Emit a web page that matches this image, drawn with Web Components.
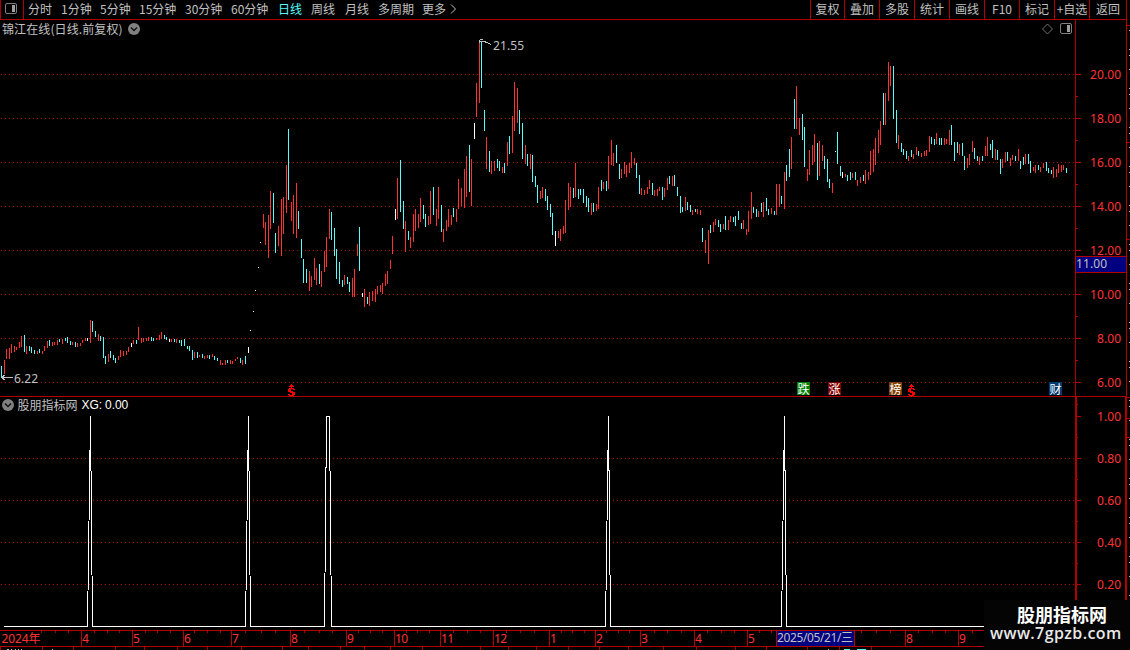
<!DOCTYPE html>
<html lang="zh-CN"><head><meta charset="utf-8"><title>锦江在线</title>
<style>
html,body{margin:0;background:#000;overflow:hidden}
body{width:1130px;height:650px;font:12px/20px "Noto Sans CJK SC",sans-serif;color:#c0c0c0;--line:#b00000;--red:#ff3232;--cyan:#54fcfc}
</style></head><body><stock-app></stock-app>
<script>
const define=(name,cls)=>customElements.define(name,cls);
class Base extends HTMLElement{constructor(){super();this.attachShadow({mode:'open'})}
 set html(v){this.shadowRoot.innerHTML=v}}

define('round-toggle',class extends Base{connectedCallback(){this.html=`<style>:host{display:block;width:12px;height:12px}svg{display:block}</style>
<svg width="12" height="12"><circle cx="6" cy="6" r="6" fill="#808080"/><path d="M3 4.5L6 7.5L9 4.5" fill="none" stroke="#111" stroke-width="1.4"/></svg>`}});

define('layout-icon',class extends Base{connectedCallback(){this.html=`<style>:host{display:block;width:12px;height:12px}svg{display:block}</style>
<svg width="12" height="12"><rect x=".5" y=".5" width="11" height="10" rx="1.5" fill="none" stroke="#808080"/><rect x="7" y="2" width="3" height="7" fill="#a0a0a0"/></svg>`}});

define('tab-item',class extends Base{connectedCallback(){this.html=`<style>:host{display:block;white-space:nowrap;line-height:18px;height:19px}:host([on]){color:var(--cyan)}</style><slot></slot>`}});
define('tool-cell',class extends Base{connectedCallback(){this.html=`<style>:host{display:block;box-sizing:border-box;border-left:1px solid var(--line);text-align:center;white-space:nowrap;line-height:18px;height:19px}</style><slot></slot>`}});

define('top-bar',class extends Base{connectedCallback(){
 const tabs=['分时','1分钟','5分钟','15分钟','30分钟','60分钟','日线','周线','月线','多周期','更多'];
 const tools=['复权','叠加','多股','统计','画线','F10','标记','+自选','返回'];
 this.html=`<style>:host{display:flex;justify-content:space-between;box-sizing:border-box;width:1127px;height:20px;border-bottom:1px solid var(--line);border-left:1px solid var(--line);border-right:1px solid var(--line)}
 .l{display:flex}.i{width:22px;border-right:1px solid var(--line);box-sizing:content-box;padding-top:3px;height:16px}.i layout-icon{margin-left:4px}
 .t{display:grid;padding-left:4px;grid-template-columns:33px 39px 39px 46px 46px 47px 33px 34px 33px 44px 28px 12px}
 .r{display:grid;grid-template-columns:34px 35px 35px 35px 35px 35px 35px 35px 37px}svg{margin-top:4px}</style>
 <div class="l"><div class="i"><layout-icon></layout-icon></div><div class="t">${tabs.map(t=>`<tab-item ${t==='日线'?'on':''}>${t}</tab-item>`).join('')}<svg width="8" height="10"><path d="M1 .5L5.5 5L1 9.5" fill="none" stroke="#c0c0c0"/></svg></div></div>
 <div class="r">${tools.map(t=>`<tool-cell>${t}</tool-cell>`).join('')}</div>`}});

define('event-tag',class extends Base{connectedCallback(){this.html=`<style>:host{position:absolute;top:362px;width:13px;height:13px;left:var(--x);background:var(--bg);color:#fff;font-size:12px;line-height:13px;text-align:center}</style><slot></slot>`}});
define('dividend-mark',class extends Base{connectedCallback(){this.html=`<style>:host{position:absolute;top:364px;left:var(--x);width:8px;height:13px}svg{display:block}</style>
<svg width="8" height="13" shape-rendering="crispEdges"><path d="M3 0h1v1h1v1h1v1h-5v-1h1v-1h1zM3 3h1v1h2v1h1v1h-2v-1h-2v2h2v1h2v3h-1v1h-2v1h-1v-1h-2v-1h-1v-1h2v1h2v-2h-2v-1h-2v-3h1v-1h2z" fill="#f00"/></svg>`}});

/* x, high, low; r = rising, c = falling, w = unchanged */
const BARS=`c1,366,378 r4,360,374 r6,349,359 r9,348,359 r11,344,353 r14,346,352 r16,347,350 r19,342,348 r21,336,347 c24,335,352 r26,346,354 c29,346,351 c31,347,353 c34,350,354 r37,351,354 c39,349,353 r42,351,354 r44,346,351 r47,341,348 c49,340,346 r52,342,346 r54,342,345 r57,340,345 c59,339,342 r62,339,344 c65,338,341 c67,337,343 c70,341,345 r72,342,345 c75,342,347 r77,343,347 r80,343,346 r82,340,343 r85,338,341 w87,338,341 r90,320,343 c92,321,332 c95,331,337 r98,334,341 c100,336,341 c103,337,358 c105,356,364 r108,354,362 c110,351,358 c113,355,360 c115,358,363 r118,356,360 r120,350,357 r123,351,356 r126,351,355 r128,347,352 w131,343,347 r133,340,344 c136,340,344 r138,327,340 r141,338,343 r143,338,342 r146,338,341 r148,337,341 c151,337,341 c153,338,341 r156,338,340 r159,335,340 r161,332,339 c164,335,339 c166,337,340 w169,339,342 r171,339,342 c174,339,342 r176,339,343 c179,340,343 c181,340,346 c184,339,346 c187,346,349 c189,346,351 c192,350,360 r194,352,358 c197,352,358 r199,355,357 c202,354,358 r204,356,359 r207,355,358 c209,355,359 r212,354,357 c214,356,360 c217,358,361 r220,360,365 r222,363,365 r225,360,365 c227,360,363 r230,360,364 r232,361,364 r235,359,361 r237,357,359 c240,358,363 r242,360,365 c245,356,364 w248,347,353 w250,330,331 w253,311,312 w255,290,291 w258,267,268 w260,242,243 r263,214,228 r265,222,245 r268,215,258 r270,191,229 c273,193,223 c275,233,253 r278,226,246 r281,199,256 r283,197,234 r286,165,213 c288,129,200 r291,202,221 r293,195,234 r296,183,238 c298,211,229 c301,239,258 c303,259,283 c306,269,283 r309,271,291 r311,276,287 r314,258,280 r316,268,285 c319,264,284 r321,271,287 r324,251,272 r326,237,267 r329,209,239 c331,212,240 c334,228,256 c336,249,279 c339,262,284 c342,280,287 r344,275,285 c347,277,284 c349,282,292 r352,278,297 r354,269,297 r357,244,256 c359,227,271 w362,293,297 r364,289,307 c367,297,304 r369,292,306 r372,291,301 r375,289,302 r377,286,294 r380,285,292 r382,283,294 r385,274,286 r387,271,284 r390,260,269 r392,236,254 w395,209,220 r397,178,219 c400,160,212 c403,201,229 r405,221,252 c408,231,240 r410,237,248 r413,214,242 r415,209,231 r418,214,228 r420,198,222 c423,205,219 c425,214,227 r428,216,225 r430,191,224 c433,187,215 r436,209,226 r438,187,219 c441,205,232 r443,229,242 r446,220,231 r448,209,227 r451,215,225 c453,208,217 r456,209,222 r458,179,209 r461,188,206 r464,169,208 r466,156,197 c469,145,192 r471,159,206 w474,123,139 r476,83,117 r479,41,103 c481,42,88 c484,110,131 r486,137,169 c489,151,172 r491,161,174 r494,161,171 c497,159,168 c499,161,171 r502,167,173 c504,163,173 r507,142,166 c509,136,154 r512,116,153 r514,82,131 r517,88,123 c519,110,134 c522,123,159 r525,145,164 c527,154,166 r530,154,169 c532,155,182 c535,176,187 c537,185,203 r540,191,199 r542,187,198 c545,189,201 c547,196,210 c550,204,217 c552,213,235 w555,231,246 r558,231,238 r560,229,241 r563,226,234 r565,200,233 r568,183,210 r570,187,207 c573,188,198 r575,163,197 c578,189,199 c580,189,195 c583,189,203 c586,196,207 c588,198,212 r591,203,215 c593,203,212 r596,204,211 r598,187,209 c601,180,191 r603,182,189 c606,181,191 r608,156,189 r611,140,165 r613,153,166 c616,145,163 c619,164,179 r621,169,178 r624,162,174 r626,165,177 r629,163,173 r631,152,168 r634,158,165 c636,163,178 c639,175,194 r641,188,195 r644,190,195 r647,187,194 r649,180,189 c652,183,195 r654,190,196 r657,189,196 r659,187,191 c662,187,200 r664,188,197 r667,178,190 c669,176,184 r672,176,186 c674,175,186 c677,187,196 c680,196,213 c682,207,212 r685,197,211 c687,202,210 c690,205,212 r692,210,215 c695,209,212 r697,209,214 r700,210,215 c702,228,242 r705,240,253 r708,230,264 c710,225,233 r713,222,232 r715,219,225 c718,220,227 c720,224,232 r723,224,229 c725,216,230 r728,220,230 r730,216,222 c733,217,222 c735,216,226 c738,211,220 c741,223,229 r743,220,229 r746,229,235 r748,211,232 r751,192,219 c753,207,213 c756,209,217 r758,211,217 c761,203,212 r763,202,217 c766,198,211 c768,209,215 r771,208,214 c774,211,215 r776,184,215 r779,184,207 c781,196,204 r784,172,209 c786,165,181 c789,149,177 r791,137,169 c794,99,129 r796,86,129 r799,118,135 c802,114,140 c804,127,167 r807,169,181 r809,150,175 r812,145,165 r814,134,162 c817,143,180 r819,141,176 r822,145,161 c824,156,169 c827,159,182 c829,179,188 r832,183,193 w835,151,152 c837,132,164 c840,166,176 w842,172,178 r845,174,177 c847,175,181 c850,172,180 r852,173,178 c855,172,180 r857,180,186 r860,177,183 c863,175,181 r865,170,184 r868,172,180 r870,151,175 r873,149,172 r875,138,165 r878,130,153 r880,121,145 c883,93,125 r885,93,125 r888,62,101 r890,66,86 c893,66,119 c896,110,143 r898,135,149 c901,143,152 c903,149,155 c906,151,159 r908,156,161 c911,150,157 r913,154,159 r916,147,155 c918,151,156 r921,153,157 r924,151,156 r926,150,156 r929,136,152 c931,137,144 c934,139,145 r936,133,144 c939,138,145 c941,138,145 r944,138,145 r946,139,144 r949,130,145 c951,125,145 c954,142,161 c957,142,153 r959,144,155 c962,143,156 c964,156,170 r967,158,168 r969,154,165 r972,141,152 c974,148,159 c977,156,161 r979,157,165 c982,156,161 r985,146,156 r987,137,156 c990,144,150 c992,140,158 r995,149,160 c997,150,160 c1000,159,174 r1002,159,168 r1005,152,162 c1007,152,161 r1010,158,166 r1012,155,160 c1015,156,161 r1018,149,161 c1020,161,169 c1023,157,165 r1025,154,164 c1028,154,164 c1030,161,173 r1033,167,171 r1035,165,173 c1038,165,170 r1040,167,172 r1043,163,168 c1046,162,171 c1048,168,173 c1051,170,174 r1053,167,178 r1056,169,177 r1058,164,173 r1061,165,172 r1063,165,170 c1066,168,173`;
const barPath=k=>BARS.split(' ').filter(b=>b[0]===k).map(b=>{const[x,a,z]=b.slice(1).split(',');return `M${x} ${a}h1V${z}h-1z`}).join('');
const grid=ys=>ys.map(y=>`<line x1="1" x2="1075" y1="${y+.5}" y2="${y+.5}" stroke="#b00000" stroke-dasharray="1 3"/>`).join('');

define('price-chart',class extends Base{connectedCallback(){this.html=`<style>:host{display:block;position:relative;width:1075px;height:376px}
 header{display:flex;height:18px;padding:0 3px 0 2px;line-height:18px;align-items:center;justify-content:space-between}.n,.o{display:flex;align-items:center}.n{gap:5px}.n span{width:121px;white-space:nowrap;letter-spacing:.1px}.o{gap:6px}
 .plot{position:absolute;left:0;top:0}text{fill:#c0c0c0;font:12px "Noto Sans",sans-serif}</style>
 <svg class="plot" width="1075" height="376" viewBox="0 20 1075 376">
 <g shape-rendering="crispEdges">${grid([74,118,162,206,250,294,338,382])}<path d="${barPath('r')}" fill="#ff3232"/><path d="${barPath('c')}" fill="#54fcfc"/><path d="${barPath('w')}" fill="#fff"/>
 <path d="M1.5 377.5H13M3 375.5h2M2 376.5h2M2 378.5h2M3 379.5h2M479.5 43v-3M480 39.5h3M480 41.5h4l3 1l4 2" fill="none" stroke="#c0c0c0"/></g>
 <text x="14" y="383" textLength="24">6.22</text><text x="493" y="50" textLength="31">21.55</text></svg>
 <header><div class="n"><span>锦江在线(日线.前复权)</span><round-toggle></round-toggle></div><div class="o"><svg width="12" height="12"><path d="M5.5 1L10.5 6L5.5 11L.5 6Z" fill="none" stroke="#808080" stroke-width=".9"/></svg><layout-icon></layout-icon></div></header>
 <slot></slot>`}});

define('value-axis',class extends Base{connectedCallback(){
 const y0=+this.getAttribute('top'),h=+this.getAttribute('height'),w=+this.getAttribute('stroke');
 const major=this.getAttribute('labels').split(' ').map(s=>s.split('@')),step=+this.getAttribute('step');
 const t=major.map(([v,y])=>`<path d="M1 ${+y+.5}h5M1 ${+y+step+.5}h2" stroke="#b00000"/><text x="${v.length>4?15:22}" y="${+y+5}" textLength="${v.length>4?31:24}">${v}</text>`).join('');
 this.html=`<style>:host{display:block;box-sizing:border-box;width:52px;height:${h}px;border-left:${w}px solid var(--line);border-right:${w}px solid var(--line)}svg{display:block;margin-left:-${w}px;overflow:visible}text{fill:var(--red);font:12px "Noto Sans",sans-serif}</style>
 <svg width="51" height="${h}" viewBox="0 ${y0} 51 ${h}">${t}${this.hasAttribute('cursor')?`<rect x="1" y="256" width="50" height="17" fill="#b00000"/><rect x="1" y="257" width="50" height="15" fill="#000080"/><text x="1" y="268" textLength="31" style="fill:#c0c0c0">11.00</text>`:''}</svg>`}});

define('signal-chart',class extends Base{connectedCallback(){
 const sp=x=>`L${x-3} 626L${x} 416L${x+2} 626`;
 this.html=`<style>:host{display:block;position:relative;width:1075px;height:233px}header{display:flex;align-items:center;height:16px;padding:0 2px;gap:4px;line-height:16px}b{font:12px/16px "Liberation Sans",sans-serif;color:#fff;margin-left:1px;letter-spacing:-.1px}.plot{position:absolute;left:0;top:0}span{width:59px;margin-left:-.5px;white-space:nowrap}</style>
 <svg class="plot" width="1075" height="233" viewBox="0 397 1075 233" shape-rendering="crispEdges">${grid([458,500,542,584])}
 <path transform="translate(.5 .5)" d="M3.5 626${sp(90)}${sp(248)}L324 626L326 416H329L331 626${sp(608)}${sp(784)}H1075" fill="none" stroke="#fff" stroke-linejoin="bevel"/></svg>
 <header><round-toggle></round-toggle><span>股朋指标网</span><b>XG: 0.00</b></header>`}});

define('time-line',class extends Base{connectedCallback(){
 const m=[[81,'4'],[132,'5'],[183,'6'],[231,'7'],[290,'8'],[346,'9'],[394,'10'],[440,'11'],[493,'12'],[549,'1'],[595,'2'],[640,'3'],[694,'4'],[747,'5'],[905,'8'],[958,'9']];
 const minor=[41,55,68,94,107,119,145,157,170,194,207,220,245,261,275,304,319,332,358,370,382,406,417,429,453,467,480,506,520,534,561,572,584,606,618,629,654,667,681,707,721,734,759,771,861,876,890,918,932,945,972];
 const low=[0,42,73,115,144,177,207,241,282,308,340,364,390,422,480,508,536,568,599,628,663,696,735,766,807,839,871];
 this.html=`<style>:host{display:block;width:1130px;height:20px;overflow:hidden}svg{display:block}text{fill:var(--red);font:12px "Noto Sans","Noto Sans CJK SC",sans-serif}</style>
 <svg width="1130" height="20" viewBox="0 630 1130 20"><g stroke="#b00000" shape-rendering="crispEdges"><path d="M0 630.5H1127M0 646.5H1127"/>${m.map(a=>`<path d="M${a[0]+.5} 630v17"/>`).join('')}${minor.map(x=>`<path d="M${x+.5} 631v2"/>`).join('')}${low.map(x=>`<path d="M${x+.5} 647v3"/>`).join('')}<path d="M776.5 630v17M854.5 630v17"/></g>
 <rect x="777" y="631" width="77" height="15" fill="#000080"/><text x="1.5" y="643" textLength="39">2024年</text>${m.map(a=>`<text x="${a[0]+1}" y="643" ${a[1].length>1?'textLength="13"':''}>${a[1]}</text>`).join('')}
 <text x="777" y="642" textLength="76" style="fill:#c0c0c0">2025/05/21/三</text>
 <path d="M7 649.5h2m2 0h1m3 0h1m2 0h1m2 0h1m30 0h1M828 649.5h1M844 649.5h5" stroke="#c0c0c0"/><path d="M845 649.5h5m7 0h9" stroke="#54fcfc"/></svg>`}});

define('side-strip',class extends Base{connectedCallback(){this.html=`<style>:host{display:block;width:3px;height:630px}svg{display:block}</style><svg width="3" height="630" shape-rendering="crispEdges"><path d="M0 25.5h3M0 142.5h3M0 239.5h3M0 397.5h3M0 418.5h3M0 437.5h3" stroke="#b00000"/>
 <path d="M2.5 30V610" stroke="#c0c0c0" stroke-dasharray="1 18 1 5 1 13"/></svg>`}});
define('site-mark',class extends Base{connectedCallback(){this.html=`<style>:host{position:absolute;left:984px;top:600px;width:146px;height:50px;background:#040404;color:#fff;box-sizing:border-box;padding:4px 6px 0 6px}
 .a{display:block;margin-left:27px;font:bold 18px/21px "Noto Sans CJK SC",sans-serif;white-space:nowrap}.b{display:block;font:600 16px/17px "Open Sans",sans-serif;white-space:nowrap;letter-spacing:.4px;color:#e8e8e8}</style><span class="a">股朋指标网</span><span class="b">www.7gpzb.com</span>`}});

define('stock-app',class extends Base{connectedCallback(){this.html=`<style>:host{display:block;position:relative;width:1130px;height:650px;background:#000;overflow:hidden}.m{display:flex;height:630px}.w{width:1127px}.p,.s{display:flex}.p{height:376px;border-bottom:1px solid var(--line)}.s{height:233px}.p value-axis,.s value-axis{flex:none}.s signal-chart,.p price-chart{flex:none}</style>
 <div class="m"><div class="w"><top-bar></top-bar><div class="p"><price-chart><dividend-mark style="--x:288px"></dividend-mark><event-tag style="--x:797px;--bg:#008000">跌</event-tag><event-tag style="--x:828px;--bg:#800000">涨</event-tag><event-tag style="--x:889px;--bg:#804000">榜</event-tag><dividend-mark style="--x:908px"></dividend-mark><event-tag style="--x:1049px;--bg:#003a70">财</event-tag></price-chart>
 <value-axis top="20" height="376" stroke="1" step="22" cursor labels="20.00@74 18.00@118 16.00@162 14.00@206 12.00@250 10.00@294 8.00@338 6.00@382"></value-axis></div>
 <div class="s"><signal-chart></signal-chart><value-axis top="397" height="233" stroke="2" step="21" labels="1.00@416 0.80@458 0.60@500 0.40@542 0.20@584"></value-axis></div></div><side-strip></side-strip></div>
 <time-line></time-line><site-mark></site-mark>`}});
</script></body></html>
